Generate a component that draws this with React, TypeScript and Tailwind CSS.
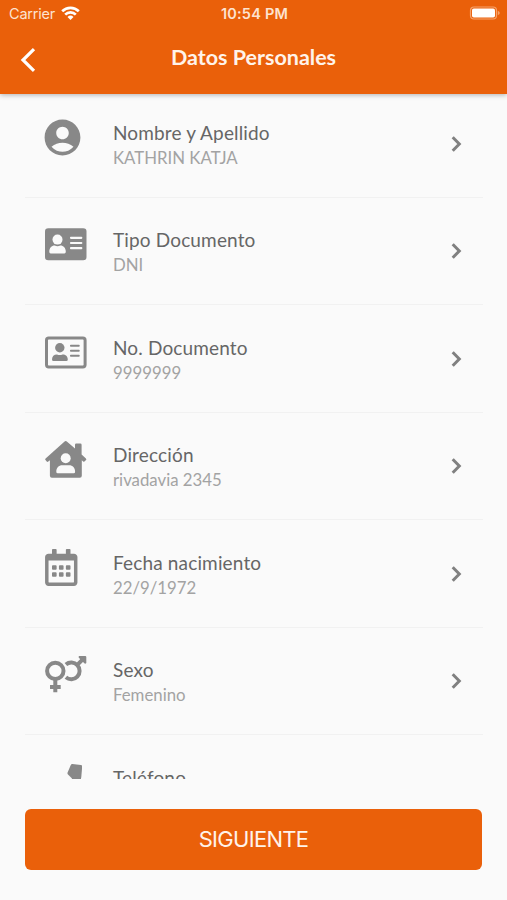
import React from 'react';
import { FaRegCalendarAlt } from 'react-icons/fa';
import { MdAccountCircle } from 'react-icons/md';

const FIELDS = [
    { label: 'Nombre y Apellido', value: 'KATHRIN KATJA', icon: 'person' },
    { label: 'Tipo Documento', value: 'DNI', icon: 'card' },
    { label: 'No. Documento', value: '9999999', icon: 'cardOutline' },
    { label: 'Dirección', value: 'rivadavia 2345', icon: 'home' },
    { label: 'Fecha nacimiento', value: '22/9/1972', icon: 'calendar' },
    { label: 'Sexo', value: 'Femenino', icon: 'gender' },
    { label: 'Teléfono', value: '', icon: 'phone' },
];

const CardIcon = () => (
    <svg className="w-[42px] h-[37px]" viewBox="0 0 42 37" fill="currentColor">
        <rect y="2.300" width="41.500" height="32" rx="3.300" />
        <g fill="#fafafa">
            <circle cx="12.500" cy="13.600" r="5" />
            <path d="M4.300 25.800c0-3.700 2.200-6.200 5.400-6.200 1.800.8 3.800.8 5.600 0 3.200 0 5.500 2.500 5.500 6.200q0 1.600-1.400 1.600H5.700q-1.400 0-1.400-1.600z" />
            <rect x="25" y="10.700" width="12.300" height="2.200" rx=".8" />
            <rect x="25" y="15.900" width="12.300" height="2.200" rx=".8" />
            <rect x="25" y="21.100" width="12.300" height="2.200" rx=".8" />
        </g>
    </svg>
);

const CardOutlineIcon = () => (
    <svg className="w-[42px] h-[37px]" viewBox="0 0 42 37" fill="currentColor">
        <rect x="1.500" y="4" width="38.600" height="29" rx="2.200" fill="none" stroke="currentColor" strokeWidth="3" />
        <circle cx="14.800" cy="13.800" r="4.700" />
        <path d="M7 25.500c0-3.200 1.900-5.100 5-5.100 1.800.7 3.800.7 5.500 0 3.200 0 5.300 1.900 5.300 5.100q0 1.500-1.500 1.500H8.500Q7 27 7 25.500z" />
        <rect x="25" y="10.700" width="9.700" height="2.100" rx=".8" />
        <rect x="25" y="15.700" width="9.700" height="2.100" rx=".8" />
        <rect x="25" y="20.700" width="9.700" height="2.100" rx=".8" />
    </svg>
);

const HomeIcon = () => (
    <svg className="w-[42px] h-[37px]" viewBox="0 0 42 37" fill="currentColor">
        <path d="M19.300.7q1.400-1.200 2.800 0L30 7.600V3.800q0-1.300 1.300-1.300h4q1.300 0 1.300 1.300v9.700l4.300 3.900q.8.800.1 1.600l-1.200 1.300q-.8.800-1.600.1l-1.400-1.200v15.600q0 2-2 2H6.900q-2 0-2-2V19.200l-1.600 1.400q-.8.600-1.600-.1L.5 19.100q-.7-.9.1-1.700z" />
        <circle cx="20.700" cy="17.200" r="5" fill="#fafafa" />
        <path d="M11.300 30.800c0-4.200 2.400-6.600 6-6.600h6.800c3.600 0 6 2.400 6 6.600q0 1.500-1.400 1.500h-16q-1.400 0-1.400-1.500z" fill="#fafafa" />
    </svg>
);

const GenderIcon = () => (
    <svg className="w-[42px] h-[37px]" viewBox="0 0 42 37" fill="none" stroke="currentColor" strokeWidth="4">
        <circle cx="10.300" cy="14.900" r="8.200" />
        <path d="M10.300 23v13.200M5 31h10.700" />
        <path d="M20.900 8.600a8.300 8.300 0 1 1 0 12.600M32 9.200l5.500-5.500" />
        <path d="M34.200 0h6q1.100 0 1.100 1.100v6q-1 1.200-2 .2l-5.500-5.500q-.7-1.100.4-1.800z" fill="currentColor" stroke="none" />
    </svg>
);

const PhoneIcon = () => (
    <svg className="w-[37px] h-[37px]" viewBox="0 0 37 37" fill="currentColor">
        <path d="M27.400.1 35.900.9q1.300.2 1.300 1.500L36.300 13C34 27 22 36 3 36.500q-1.300 0-1.600-1.200L0 28q0-1.200 1-1.700l8-3.300q1.200-.4 2 .6l3 4C20 25 25.500 20 27 14.500l-4-4q-.8-.8-.4-1.900L25.800 1q.5-1 1.600-.9z" />
    </svg>
);

const getIcon = (type: string) => {
    switch (type) {
        case 'person': return <MdAccountCircle className="w-[43px] h-[43px] -ml-[4px] -mt-[3px]" />;
        case 'card': return <CardIcon />;
        case 'cardOutline': return <CardOutlineIcon />;
        case 'home': return <HomeIcon />;
        case 'calendar': return <FaRegCalendarAlt className="w-[32.500px] h-[37px]" />;
        case 'gender': return <GenderIcon />;
        default: return <PhoneIcon />;
    }
};

const StatusBar = () => (
    <div className="grid grid-cols-[1fr_80px_1fr] items-center h-[27px] pl-[9px] pr-[7px] text-[#fde3d0]">
        <div className="flex items-center gap-[6px]">
            <span className="text-[14.500px] tracking-[-0.200px]">Carrier</span>
            <svg className="-mt-[2px]" width="19" height="14" viewBox="0 0 19 14" fill="none" stroke="#fff" strokeWidth="2.700">
                <path d="M1.200 5.200a11.800 11.800 0 0 1 16.600 0" />
                <path d="M4.200 8.600a7.500 7.500 0 0 1 10.600 0" />
                <path d="M9.500 13.900 6.500 10.900a4.300 4.300 0 0 1 6 0z" fill="#fff" stroke="none" />
            </svg>
        </div>
        <span className="text-center font-semibold text-[14.500px] tracking-[0.200px] whitespace-nowrap">10:54 PM</span>
        <svg className="justify-self-end -mt-px" width="31" height="14" viewBox="0 0 31 14">
            <rect x="1.500" y="1" width="26" height="12" rx="3.500" fill="none" stroke="#f5a26c" strokeWidth="1.200" />
            <rect x="3" y="2.500" width="23" height="9" rx="1.800" fill="#fff" />
            <path d="M28.800 5v4c1.200-.4 1.900-1.100 1.900-2s-.7-1.600-1.900-2z" fill="#f5a26c" />
        </svg>
    </div>
);

const FieldRow = ({ label, value, icon }: { label: string; value: string; icon: string }) => (
    <div className="h-[107.500px] shrink-0 pt-[28.500px] pl-[20px] pr-[21px] flex items-start border-b border-[#f1f1f1] first:-mt-[4px]">
        <div className="w-[68px] shrink-0 text-[#888]">{getIcon(icon)}</div>
        <div className="flex-1 flex flex-col pt-px">
            <span className="text-[19px] leading-[25px] tracking-[0.150px] text-[#666]">{label}</span>
            <span className="text-[16.800px] leading-[26px] text-[#a3a3a3]">{value}</span>
        </div>
        <svg className="w-[11px] h-[17px] mt-[17px]" viewBox="0 0 11 17" fill="none" stroke="#808080" strokeWidth="3">
            <path d="M1.700 1.300 8.300 8l-6.600 6.700" />
        </svg>
    </div>
);

export default function App() {
    return (
        <div className="w-full h-[900px] bg-[#fafafa] flex flex-col overflow-hidden font-['Lato',sans-serif]">
            {/* Header */}
            <header className="h-[94px] shrink-0 bg-[#ea600a] shadow-[0_1px_5px_rgba(0,0,0,0.3)] font-['Inter',sans-serif]">
                <StatusBar />
                <div className="grid grid-cols-[60px_1fr_60px] items-center h-[61px]">
                    <svg className="ml-[20px] mt-[4px]" width="16" height="26" viewBox="0 0 16 26" fill="none" stroke="#fff" strokeWidth="3.200">
                        <path d="M14 2.200 3 13l11 10.800" />
                    </svg>
                    <h1 className="text-center text-[21.500px] font-bold text-[#fff3ea] font-['Lato',sans-serif]">Datos Personales</h1>
                </div>
            </header>

            {/* Fields */}
            <main className="h-[684.500px] shrink-0 pl-[25px] pr-[24px] flex flex-col overflow-hidden">
                {FIELDS.map((field) => <FieldRow key={field.label} {...field} />)}
            </main>

            <div className="pt-[30px] px-[25px]">
                <button className="w-full h-[61px] rounded-[6px] bg-[#ea600a] text-[#fff3ea] text-[22px] tracking-[-0.700px] font-['Inter',sans-serif]">
                    SIGUIENTE
                </button>
            </div>
        </div>
    );
}
